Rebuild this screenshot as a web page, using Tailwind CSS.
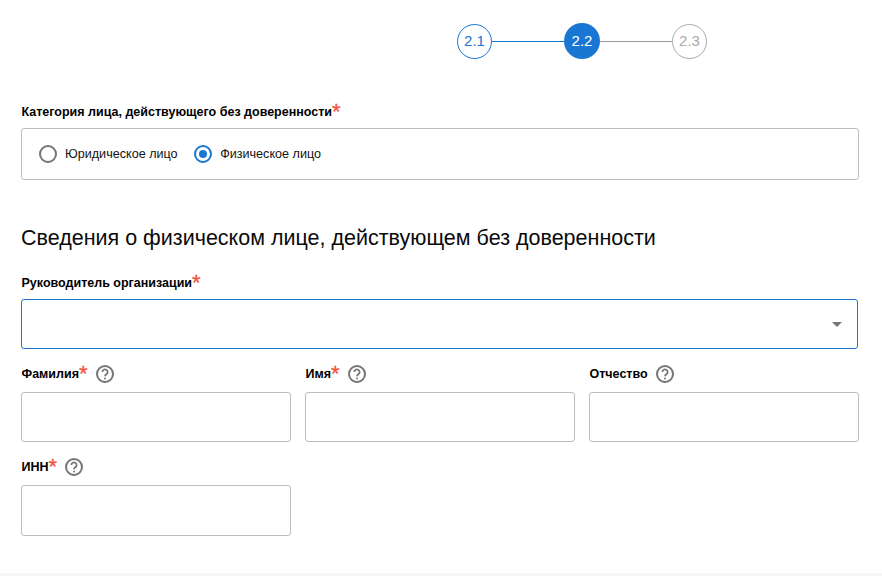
<!DOCTYPE html>
<html lang="ru">
<head>
  <meta charset="UTF-8"/>
  <meta name="viewport" content="width=device-width, initial-scale=1.0"/>
  <title>Сведения о лице</title>
  <script src="https://cdn.jsdelivr.net/npm/@tailwindcss/browser@4"></script>
</head>
<body class="bg-white font-['Liberation_Sans',sans-serif] text-[#111] h-[576px] overflow-hidden flex flex-col">

  <main class="flex-grow pl-[21px] pr-[23px]">

    <!-- Stepper -->
    <div class="flex items-center h-[36px] mt-[23px] ml-[436px] w-[250px]">
      <div class="w-[35px] h-[35px] shrink-0 rounded-full border border-[#1976d2] text-[#1976d2] text-[15px] flex items-center justify-center">2.1</div>
      <div class="grow h-px bg-[#1976d2]"></div>
      <div class="w-[36px] h-[36px] shrink-0 rounded-full bg-[#1976d2] text-white text-[15px] flex items-center justify-center">2.2</div>
      <div class="grow h-px bg-[#999]"></div>
      <div class="w-[35px] h-[35px] shrink-0 rounded-full border border-[#aaa] text-[#aaa] text-[15px] flex items-center justify-center">2.3</div>
    </div>

    <!-- Category -->
    <div class="mt-[44px] h-[18px] pl-[0.5px] flex items-center text-[12.5px] font-bold text-black">
      Категория лица, действующего без доверенности<span class="text-[#f4503c] text-[22px] leading-none font-normal [-webkit-text-stroke:0.3px_#f4503c]">*</span>
    </div>
    <div class="mt-[7px] h-[52px] border border-[#bdbdbd] rounded-[3px] flex items-center pl-[17px] gap-[16.5px] text-[12.6px]">
      <label class="flex items-center gap-[8px]">
        <span class="w-[18px] h-[18px] rounded-full border-2 border-[#757575]"></span>
        Юридическое лицо
      </label>
      <label class="flex items-center gap-[8px]">
        <span class="w-[18px] h-[18px] rounded-full border-2 border-[#1976d2] flex items-center justify-center">
          <span class="w-[8px] h-[8px] rounded-full bg-[#1976d2]"></span>
        </span>
        Физическое лицо
      </label>
    </div>

    <h2 class="mt-[44px] text-[21.5px] leading-[28px] font-normal text-[#0a0a0a]">Сведения о физическом лице, действующем без доверенности</h2>

    <!-- Head of organisation -->
    <div class="mt-[22px] h-[18px] pl-[0.5px] flex items-center text-[12.5px] font-bold text-black">
      Руководитель организации<span class="text-[#f4503c] text-[22px] leading-none font-normal [-webkit-text-stroke:0.3px_#f4503c]">*</span>
    </div>
    <div class="mt-[7px] mr-px h-[50px] border border-[#1976d2] rounded-[3px] flex items-center justify-end pr-[15px]">
      <span class="w-0 h-0 border-x-[5px] border-x-transparent border-t-[5px] border-t-[#757575]"></span>
    </div>

    <!-- Name fields -->
    <div class="mt-[15px] grid grid-cols-3 gap-x-[14px]">
      <div>
        <div class="h-[20px] pl-[0.5px] flex items-center text-[12.5px] font-bold text-black">
          Фамилия<span class="text-[#f4503c] text-[22px] leading-none font-normal [-webkit-text-stroke:0.3px_#f4503c]">*</span>
          <svg class="ml-[7px]" width="20" height="20" viewBox="0 0 20 20" fill="none" stroke="#757575" stroke-width="2"><circle cx="10" cy="10" r="8"/><path d="M7.4 8a2.6 2.6 0 1 1 4 2.2c-.9.6-1.4 1-1.4 2.1" stroke-width="1.8"/><circle cx="10" cy="14.6" r="1" fill="#757575" stroke="none"/></svg>
        </div>
        <div class="mt-[8px] h-[50px] border border-[#bdbdbd] rounded-[3px]"></div>
      </div>
      <div>
        <div class="h-[20px] pl-[0.5px] flex items-center text-[12.5px] font-bold text-black">
          Имя<span class="text-[#f4503c] text-[22px] leading-none font-normal [-webkit-text-stroke:0.3px_#f4503c]">*</span>
          <svg class="ml-[7px]" width="20" height="20" viewBox="0 0 20 20" fill="none" stroke="#757575" stroke-width="2"><circle cx="10" cy="10" r="8"/><path d="M7.4 8a2.6 2.6 0 1 1 4 2.2c-.9.6-1.4 1-1.4 2.1" stroke-width="1.8"/><circle cx="10" cy="14.6" r="1" fill="#757575" stroke="none"/></svg>
        </div>
        <div class="mt-[8px] h-[50px] border border-[#bdbdbd] rounded-[3px]"></div>
      </div>
      <div>
        <div class="h-[20px] pl-[0.5px] flex items-center text-[12.5px] font-bold text-black">
          Отчество
          <svg class="ml-[7.5px]" width="20" height="20" viewBox="0 0 20 20" fill="none" stroke="#757575" stroke-width="2"><circle cx="10" cy="10" r="8"/><path d="M7.4 8a2.6 2.6 0 1 1 4 2.2c-.9.6-1.4 1-1.4 2.1" stroke-width="1.8"/><circle cx="10" cy="14.6" r="1" fill="#757575" stroke="none"/></svg>
        </div>
        <div class="mt-[8px] h-[50px] border border-[#bdbdbd] rounded-[3px]"></div>
      </div>
    </div>

    <!-- INN -->
    <div class="mt-[15px] w-[270px]">
      <div class="h-[20px] pl-[0.5px] flex items-center text-[12.5px] font-bold text-black">
        ИНН<span class="text-[#f4503c] text-[22px] leading-none font-normal [-webkit-text-stroke:0.3px_#f4503c]">*</span>
        <svg class="ml-[7px]" width="20" height="20" viewBox="0 0 20 20" fill="none" stroke="#757575" stroke-width="2"><circle cx="10" cy="10" r="8"/><path d="M7.4 8a2.6 2.6 0 1 1 4 2.2c-.9.6-1.4 1-1.4 2.1" stroke-width="1.8"/><circle cx="10" cy="14.6" r="1" fill="#757575" stroke="none"/></svg>
      </div>
      <div class="mt-[8px] h-[51px] border border-[#bdbdbd] rounded-[3px]"></div>
    </div>
  </main>

  <div class="h-[3px] bg-[#f7f7f7]"></div>
</body>
</html>
